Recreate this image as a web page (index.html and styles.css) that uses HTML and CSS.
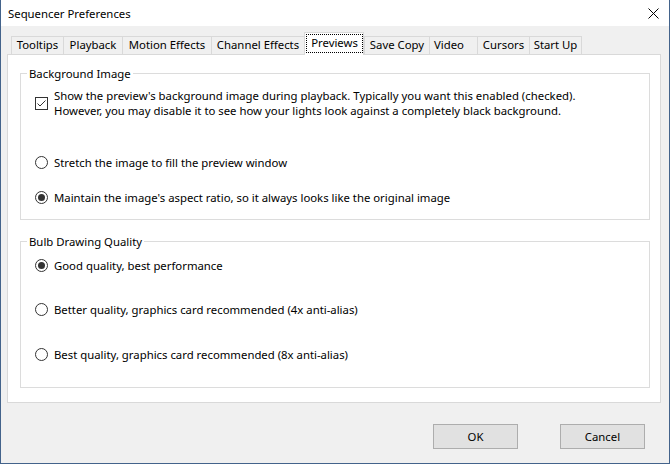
FILE: index.html
```html
<!DOCTYPE html>
<html>
<head>
<meta charset="utf-8">
<link rel="stylesheet" href="styles.css">
</head>
<body>
<div class="window">
  <div class="titlebar">
    <span class="title">Sequencer Preferences</span>
    <svg class="close" width="11" height="11" viewBox="0 0 11 11"><path d="M0.5 0.5 L10.5 10.5 M10.5 0.5 L0.5 10.5" stroke="#000" stroke-width="1" fill="none"/></svg>
  </div>
  <div class="client">
    <div class="tabs">
      <div class="tab t-tooltips">Tooltips</div>
      <div class="tab t-playback">Playback</div>
      <div class="tab t-motion">Motion Effects</div>
      <div class="tab t-channel">Channel Effects</div>
      <div class="tab active t-previews"><span class="focus">Previews</span></div>
      <div class="tab t-save">Save Copy</div>
      <div class="tab t-video">Video</div>
      <div class="tab t-cursors">Cursors</div>
      <div class="tab last t-startup">Start Up</div>
    </div>
    <div class="page">
      <fieldset class="group g1">
        <legend>Background Image</legend>
        <div class="row check-row">
          <svg class="checkbox" width="13" height="13" viewBox="0 0 13 13"><rect x="0.5" y="0.5" width="12" height="12" fill="#fff" stroke="#333"/><polyline points="2.5,6.5 5,9 10.5,3.5" fill="none" stroke="#333" stroke-width="1"/></svg>
          <span class="label">Show the preview's background image during playback. Typically you want this enabled (checked).<br>However, you may disable it to see how your lights look against a completely black background.</span>
        </div>
        <div class="row radio-row r-stretch">
          <svg class="radio" width="13" height="13" viewBox="0 0 13 13"><circle cx="6.5" cy="6.5" r="6" fill="#fff" stroke="#333"/></svg>
          <span class="label">Stretch the image to fill the preview window</span>
        </div>
        <div class="row radio-row r-maintain">
          <svg class="radio" width="13" height="13" viewBox="0 0 13 13"><circle cx="6.5" cy="6.5" r="6" fill="#fff" stroke="#333"/><circle cx="6.5" cy="6.5" r="3.5" fill="#333"/></svg>
          <span class="label">Maintain the image's aspect ratio, so it always looks like the original image</span>
        </div>
      </fieldset>
      <fieldset class="group g2">
        <legend>Bulb Drawing Quality</legend>
        <div class="row radio-row r-good">
          <svg class="radio" width="13" height="13" viewBox="0 0 13 13"><circle cx="6.5" cy="6.5" r="6" fill="#fff" stroke="#333"/><circle cx="6.5" cy="6.5" r="3.5" fill="#333"/></svg>
          <span class="label">Good quality, best performance</span>
        </div>
        <div class="row radio-row r-better">
          <svg class="radio" width="13" height="13" viewBox="0 0 13 13"><circle cx="6.5" cy="6.5" r="6" fill="#fff" stroke="#333"/></svg>
          <span class="label">Better quality, graphics card recommended (4x anti-alias)</span>
        </div>
        <div class="row radio-row r-best">
          <svg class="radio" width="13" height="13" viewBox="0 0 13 13"><circle cx="6.5" cy="6.5" r="6" fill="#fff" stroke="#333"/></svg>
          <span class="label">Best quality, graphics card recommended (8x anti-alias)</span>
        </div>
      </fieldset>
    </div>
    <div class="buttons">
      <button class="btn">OK</button>
      <button class="btn">Cancel</button>
    </div>
  </div>
</div>
</body>
</html>
```
FILE: styles.css
```css
html, body {
  margin: 0;
  padding: 0;
}
body {
  width: 670px;
  height: 464px;
  overflow: hidden;
  background: #f0f0f0;
}
.window {
  width: 670px;
  height: 464px;
  box-sizing: border-box;
  border: 1px solid #43638b;
  border-top: none;
  background: #f0f0f0;
  display: flex;
  flex-direction: column;
  font-family: "Noto Sans", "DejaVu Sans", sans-serif;
  font-size: 11.35px;
  color: #000;
}
.titlebar {
  height: 26px;
  flex: none;
  background: #fff;
  display: flex;
  align-items: center;
  justify-content: space-between;
  padding: 0 10px 0 7px;
}
.title {
  line-height: 15px;
}
.close {
  display: block;
}
.client {
  flex: 1;
  display: flex;
  flex-direction: column;
}
.tabs {
  display: flex;
  align-items: flex-end;
  height: 28px;
  margin-left: 10px;
  flex: none;
}
.tab {
  box-sizing: border-box;
  height: 18px;
  border: 1px solid #d9d9d9;
  border-bottom: none;
  border-right: none;
  background: #f0f0f0;
  line-height: 16px;
  text-align: center;
  white-space: nowrap;
}
.tab.last {
  border-right: 1px solid #d9d9d9;
}
.t-tooltips { width: 52px; }
.t-playback { width: 59px; }
.t-motion { width: 89px; }
.t-channel { width: 93px; }
.t-previews { width: 60px; }
.t-save { width: 65px; }
.t-video { width: 48px; text-align: left; padding-left: 4px; }
.t-cursors { width: 52px; }
.t-startup { width: 53px; }
.tab.active {
  height: 23px;
  margin-bottom: -1px;
  background: #fff;
  border-right: 1px solid #d9d9d9;
  position: relative;
  z-index: 1;
}
.focus {
  display: block;
  box-sizing: border-box;
  width: 57px;
  height: 19px;
  margin: 1px 0 0 1px;
  border: 1px dotted #000;
  line-height: 16px;
}
.page {
  box-sizing: border-box;
  height: 349px;
  margin: 0 8px 0 6px;
  border: 1px solid #d9d9d9;
  background: #fff;
  padding: 11px 10px 0 12px;
  flex: none;
}
.group {
  margin: 0;
  padding: 0;
  border: 1px solid #dcdcdc;
  min-width: 0;
}
.group legend {
  margin-left: 6px;
  padding: 0 2px;
  line-height: 15px;
}
.g1 {
  padding-bottom: 14px;
}
.g2 {
  margin-top: 14px;
  padding-bottom: 25px;
}
.row {
  display: flex;
  align-items: center;
  margin-left: 14px;
  line-height: 15px;
}
.row svg {
  flex: none;
  display: block;
  margin-right: 6px;
}
.check-row { margin-top: 7px; }
.r-stretch { margin-top: 37px; }
.r-maintain { margin-top: 20px; }
.r-good { margin-top: 9px; }
.r-better { margin-top: 29px; }
.r-best { margin-top: 30px; }
.buttons {
  display: flex;
  justify-content: flex-end;
  gap: 42px;
  margin: 21px 24px 0 0;
}
.btn {
  box-sizing: border-box;
  width: 85px;
  height: 25px;
  padding: 0;
  margin: 0;
  background: #e1e1e1;
  border: 1px solid #adadad;
  border-radius: 0;
  font-family: inherit;
  font-size: 11.35px;
  color: #000;
}
```
